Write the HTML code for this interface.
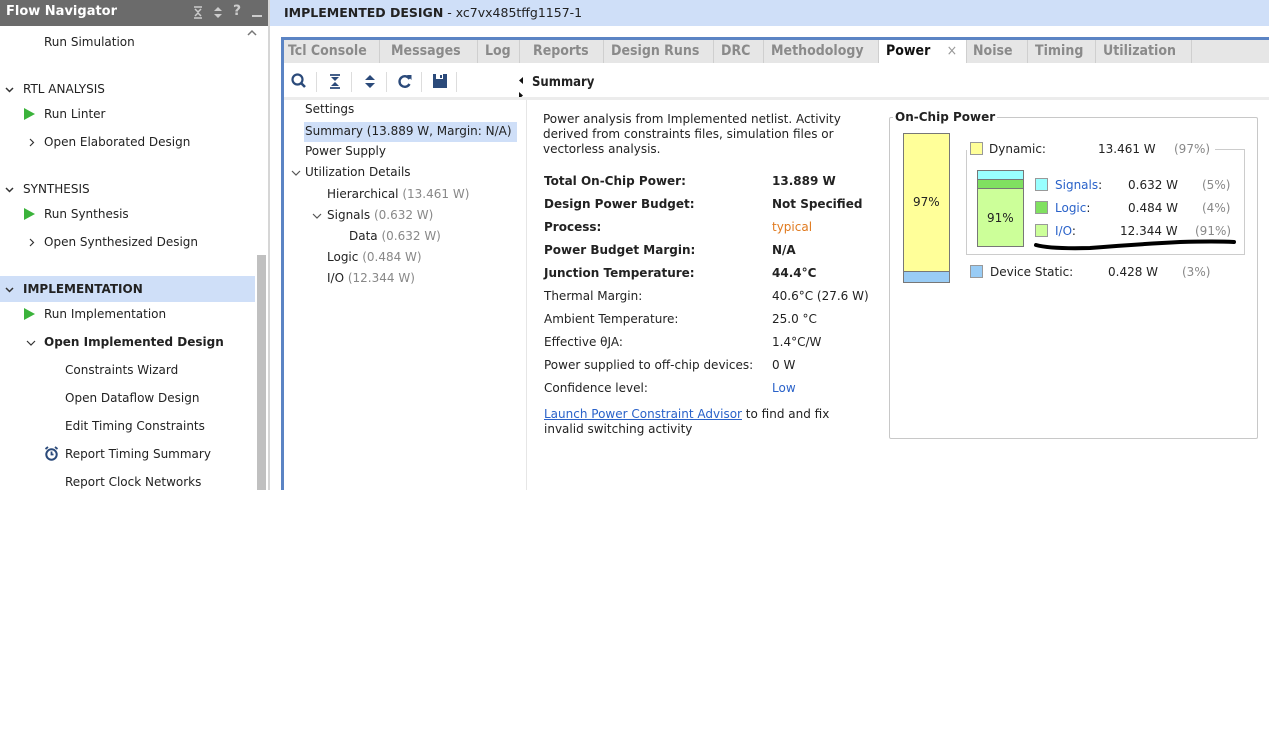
<!DOCTYPE html>
<html><head><meta charset="utf-8">
<style>
*{margin:0;padding:0;box-sizing:border-box}
body{width:1269px;height:746px;background:#fff;font-family:"DejaVu Sans","Liberation Sans",sans-serif;font-size:12px;color:#222;position:relative;overflow:hidden}
.a{position:absolute;white-space:nowrap}
.b{font-weight:bold}
.g{color:#888}
.tab{position:absolute;top:40px;height:23px;line-height:23px;font-family:"DejaVu Sans Condensed","DejaVu Sans",sans-serif;font-stretch:condensed;font-weight:bold;font-size:14px;color:#8a8a8a;padding-left:7px;border-right:1px solid #cfcfcf}
.tri{width:0;height:0;border-top:6px solid transparent;border-bottom:6px solid transparent;border-left:11px solid #3bb33b;position:absolute}
.sw{position:absolute;width:13px;height:13px;border:1px solid #999}
.lnk{color:#2a62c9}
svg.a{overflow:visible}
</style></head><body>
<!-- header -->
<div class="a" style="left:0;top:0;width:268px;height:26px;background:#6b6b6b"></div>
<div class="a b" style="left:6px;top:4px;color:#fff;font-size:13px">Flow Navigator</div>
<svg class="a" style="left:193px;top:6px" width="10" height="13"><path d="M1 1H9M1 12H9M2 3L5 6L8 3M2 10L5 7L8 10" stroke="#ccc" stroke-width="1.5" fill="none"/></svg>
<svg class="a" style="left:213px;top:6px" width="10" height="13"><path d="M1 5L5 1L9 5ZM1 8L5 12L9 8Z" fill="#ccc"/></svg>
<div class="a b" style="left:233px;top:3px;color:#ccc;font-size:14px">?</div>
<div class="a" style="left:252px;top:15px;width:10px;height:2px;background:#ccc"></div>
<div class="a" style="left:268px;top:0;width:2px;height:490px;background:#d6d6d6"></div>
<div class="a" style="left:270px;top:0;width:999px;height:26px;background:#cfdff8"></div>
<div class="a" style="left:284px;top:5px;font-size:12.5px"><span class="b">IMPLEMENTED DESIGN</span> - xc7vx485tffg1157-1</div>
<!-- left nav -->
<div class="a" style="left:44px;top:35px">Run Simulation</div>
<svg class="a" style="left:247px;top:30px" width="10" height="6"><path d="M1 5L5 1L9 5" stroke="#777" stroke-width="1.5" fill="none"/></svg>
<svg class="a" style="left:5px;top:87px" width="9" height="6"><path d="M1 1L4.5 4.5L8 1" stroke="#333" stroke-width="1.5" fill="none"/></svg>
<div class="a" style="left:23px;top:82px">RTL ANALYSIS</div>
<div class="tri" style="left:24px;top:108px"></div>
<div class="a" style="left:44px;top:107px">Run Linter</div>
<svg class="a" style="left:29px;top:138px" width="6" height="9"><path d="M1 1L4.5 4.5L1 8" stroke="#333" stroke-width="1.2" fill="none"/></svg>
<div class="a" style="left:44px;top:135px">Open Elaborated Design</div>
<svg class="a" style="left:5px;top:187px" width="9" height="6"><path d="M1 1L4.5 4.5L8 1" stroke="#333" stroke-width="1.5" fill="none"/></svg>
<div class="a" style="left:23px;top:182px">SYNTHESIS</div>
<div class="tri" style="left:24px;top:208px"></div>
<div class="a" style="left:44px;top:207px">Run Synthesis</div>
<svg class="a" style="left:29px;top:238px" width="6" height="9"><path d="M1 1L4.5 4.5L1 8" stroke="#333" stroke-width="1.2" fill="none"/></svg>
<div class="a" style="left:44px;top:235px">Open Synthesized Design</div>
<div class="a" style="left:0;top:276px;width:255px;height:26px;background:#cfdff8"></div>
<svg class="a" style="left:5px;top:287px" width="9" height="6"><path d="M1 1L4.5 4.5L8 1" stroke="#333" stroke-width="1.5" fill="none"/></svg>
<div class="a b" style="left:23px;top:282px">IMPLEMENTATION</div>
<div class="tri" style="left:24px;top:308px"></div>
<div class="a" style="left:44px;top:307px">Run Implementation</div>
<svg class="a" style="left:26px;top:340px" width="10" height="6"><path d="M1 1L5 5L9 1" stroke="#333" stroke-width="1.2" fill="none"/></svg>
<div class="a b" style="left:44px;top:335px">Open Implemented Design</div>
<div class="a" style="left:65px;top:363px">Constraints Wizard</div>
<div class="a" style="left:65px;top:391px">Open Dataflow Design</div>
<div class="a" style="left:65px;top:419px">Edit Timing Constraints</div>
<svg class="a" style="left:44px;top:446px" width="15" height="15"><circle cx="7.5" cy="8.5" r="5.2" stroke="#2b4a7a" stroke-width="2" fill="none"/><path d="M7.5 5.5V8.5H9.5M1.5 3L4 1M13.5 3L11 1" stroke="#2b4a7a" stroke-width="1.8" fill="none"/></svg>
<div class="a" style="left:65px;top:447px">Report Timing Summary</div>
<div class="a" style="left:65px;top:475px">Report Clock Networks</div>
<div class="a" style="left:257px;top:255px;width:9px;height:235px;background:#c0c0c0"></div>
<!-- main panel -->
<div class="a" style="left:281px;top:37px;width:988px;height:3px;background:#5b84c4"></div>
<div class="a" style="left:281px;top:37px;width:3px;height:453px;background:#5b84c4"></div>
<div class="a" style="left:284px;top:40px;width:985px;height:23px;background:#e6e6e6"></div>
<div class="tab" style="left:281px;width:99px">Tcl Console</div>
<div class="tab" style="left:384px;width:94px">Messages</div>
<div class="tab" style="left:478px;width:42px">Log</div>
<div class="tab" style="left:526px;width:78px">Reports</div>
<div class="tab" style="left:604px;width:110px">Design Runs</div>
<div class="tab" style="left:714px;width:50px">DRC</div>
<div class="tab" style="left:764px;width:115px">Methodology</div>
<div class="tab" style="left:879px;width:88px;background:#fff;color:#111">Power <span style="font-weight:normal;color:#999;margin-left:12px">×</span></div>
<div class="tab" style="left:966px;width:62px">Noise</div>
<div class="tab" style="left:1028px;width:68px">Timing</div>
<div class="tab" style="left:1096px;width:96px">Utilization</div>
<!-- toolbar -->
<svg class="a" style="left:291px;top:73px" width="16" height="16"><circle cx="6.5" cy="6.5" r="5" stroke="#2b4a7a" stroke-width="2.2" fill="none"/><path d="M10 10L14 14" stroke="#2b4a7a" stroke-width="2.6"/></svg>
<svg class="a" style="left:329px;top:74px" width="12" height="15"><path d="M1 1H11M1 14H11" stroke="#2b4a7a" stroke-width="1.8"/><path d="M2 3H10L6 7ZM2 12H10L6 8Z" fill="#2b4a7a"/></svg>
<svg class="a" style="left:364px;top:74px" width="12" height="15"><path d="M1 6L6 1L11 6ZM1 9L6 14L11 9Z" fill="#2b4a7a"/></svg>
<svg class="a" style="left:398px;top:74px" width="14" height="15"><path d="M11.5 5A5.3 5.3 0 1 0 11.5 10" stroke="#2b4a7a" stroke-width="2.4" fill="none"/><path d="M9 1L13.5 1L13.5 6Z" fill="#2b4a7a"/></svg>
<svg class="a" style="left:433px;top:74px" width="14" height="14"><path d="M0 0H14V14H0Z" fill="#2b4a7a"/><path d="M3 0H10V5H3Z" fill="#fff"/><path d="M7 1H9V4H7Z" fill="#2b4a7a"/></svg>
<div class="a" style="left:316px;top:72px;width:1px;height:20px;background:#ddd"></div>
<div class="a" style="left:351px;top:72px;width:1px;height:20px;background:#ddd"></div>
<div class="a" style="left:386px;top:72px;width:1px;height:20px;background:#ddd"></div>
<div class="a" style="left:421px;top:72px;width:1px;height:20px;background:#ddd"></div>
<div class="a" style="left:456px;top:72px;width:1px;height:20px;background:#ddd"></div>
<svg class="a" style="left:518px;top:76px" width="6" height="24"><path d="M5 1L1 4.5L5 8ZM1 16L5 19.5L1 23Z" fill="#111"/></svg>
<div class="a b" style="left:532px;top:75px;font-size:13px;font-family:'DejaVu Sans Condensed','DejaVu Sans',sans-serif;font-stretch:condensed">Summary</div>
<div class="a" style="left:284px;top:97px;width:985px;height:3px;background:#ececec"></div>
<div class="a" style="left:526px;top:100px;width:1px;height:390px;background:#e6e6e6"></div>
<!-- tree -->
<div class="a" style="left:305px;top:102px">Settings</div>
<div class="a" style="left:304px;top:122px;width:213px;height:20px;background:#cfdff8"></div>
<div class="a" style="left:305px;top:124px">Summary (13.889 W, Margin: N/A)</div>
<div class="a" style="left:305px;top:144px">Power Supply</div>
<svg class="a" style="left:291px;top:170px" width="10" height="6"><path d="M1 1L5 5L9 1" stroke="#555" stroke-width="1.2" fill="none"/></svg>
<div class="a" style="left:305px;top:165px">Utilization Details</div>
<div class="a" style="left:327px;top:187px">Hierarchical <span class="g">(13.461 W)</span></div>
<svg class="a" style="left:312px;top:213px" width="10" height="6"><path d="M1 1L5 5L9 1" stroke="#555" stroke-width="1.2" fill="none"/></svg>
<div class="a" style="left:327px;top:208px">Signals <span class="g">(0.632 W)</span></div>
<div class="a" style="left:349px;top:229px">Data <span class="g">(0.632 W)</span></div>
<div class="a" style="left:327px;top:250px">Logic <span class="g">(0.484 W)</span></div>
<div class="a" style="left:327px;top:271px">I/O <span class="g">(12.344 W)</span></div>
<!-- summary -->
<div class="a" style="left:543px;top:112px;line-height:15px">Power analysis from Implemented netlist. Activity<br>derived from constraints files, simulation files or<br>vectorless analysis.</div>
<div class="a b" style="left:544px;top:174px">Total On-Chip Power:</div><div class="a b" style="left:772px;top:174px">13.889 W</div>
<div class="a b" style="left:544px;top:197px">Design Power Budget:</div><div class="a b" style="left:772px;top:197px">Not Specified</div>
<div class="a b" style="left:544px;top:220px">Process:</div><div class="a" style="left:772px;top:220px;color:#e07a1f">typical</div>
<div class="a b" style="left:544px;top:243px">Power Budget Margin:</div><div class="a b" style="left:772px;top:243px">N/A</div>
<div class="a b" style="left:544px;top:266px">Junction Temperature:</div><div class="a b" style="left:772px;top:266px">44.4°C</div>
<div class="a" style="left:544px;top:289px">Thermal Margin:</div><div class="a" style="left:772px;top:289px">40.6°C (27.6 W)</div>
<div class="a" style="left:544px;top:312px">Ambient Temperature:</div><div class="a" style="left:772px;top:312px">25.0 °C</div>
<div class="a" style="left:544px;top:335px">Effective θJA:</div><div class="a" style="left:772px;top:335px">1.4°C/W</div>
<div class="a" style="left:544px;top:358px">Power supplied to off-chip devices:</div><div class="a" style="left:772px;top:358px">0 W</div>
<div class="a" style="left:544px;top:381px">Confidence level:</div><div class="a lnk" style="left:772px;top:381px">Low</div>
<div class="a" style="left:544px;top:407px;line-height:15px"><span class="lnk" style="text-decoration:underline">Launch Power Constraint Advisor</span> to find and fix<br>invalid switching activity</div>
<!-- on-chip power -->
<div class="a" style="left:889px;top:117px;width:369px;height:322px;border:1px solid #c8c8c8;border-radius:2px"></div>
<div class="a b" style="left:893px;top:110px;background:#fff;padding:0 2px">On-Chip Power</div>
<div class="a" style="left:903px;top:133px;width:47px;height:150px;border:1px solid #777;background:#ffff99"></div>
<div class="a" style="left:904px;top:271px;width:45px;height:11px;background:#99ccf5;border-top:1px solid #777"></div>
<div class="a" style="left:913px;top:195px">97%</div>
<div class="a" style="left:966px;top:150px;width:279px;height:105px;border:1px solid #ccc;border-top:none"></div>
<div class="a" style="left:1215px;top:149px;width:30px;height:1px;background:#ccc"></div>
<div class="sw" style="left:970px;top:142px;background:#ffff99"></div>
<div class="a" style="left:989px;top:142px;background:#fff;padding-right:6px">Dynamic:</div>
<div class="a" style="left:1098px;top:142px">13.461 W</div><div class="a g" style="left:1174px;top:142px">(97%)</div>
<div class="a" style="left:977px;top:170px;width:47px;height:77px;border:1px solid #777;background:#ccff99"></div>
<div class="a" style="left:978px;top:171px;width:45px;height:9px;background:#99ffff;border-bottom:1px solid #777"></div>
<div class="a" style="left:978px;top:180px;width:45px;height:9px;background:#80e060;border-bottom:1px solid #777"></div>
<div class="a" style="left:987px;top:211px">91%</div>
<div class="sw" style="left:1035px;top:178px;background:#99ffff"></div>
<div class="a" style="left:1055px;top:178px"><span class="lnk">Signals</span>:</div>
<div class="a" style="left:1128px;top:178px">0.632 W</div><div class="a g" style="left:1202px;top:178px">(5%)</div>
<div class="sw" style="left:1035px;top:201px;background:#80e060"></div>
<div class="a" style="left:1055px;top:201px"><span class="lnk">Logic</span>:</div>
<div class="a" style="left:1128px;top:201px">0.484 W</div><div class="a g" style="left:1202px;top:201px">(4%)</div>
<div class="sw" style="left:1035px;top:224px;background:#ccff99"></div>
<div class="a" style="left:1055px;top:224px"><span class="lnk">I/O</span>:</div>
<div class="a" style="left:1120px;top:224px">12.344 W</div><div class="a g" style="left:1195px;top:224px">(91%)</div>
<svg class="a" style="left:1030px;top:236px" width="210" height="16"><path d="M6 9 Q20 13 60 12 Q110 8 150 6 Q185 5 204 6" stroke="#000" stroke-width="4" fill="none" stroke-linecap="round"/></svg>
<div class="sw" style="left:970px;top:265px;background:#99ccf5"></div>
<div class="a" style="left:990px;top:265px">Device Static:</div>
<div class="a" style="left:1108px;top:265px">0.428 W</div><div class="a g" style="left:1182px;top:265px">(3%)</div>
</body></html>
